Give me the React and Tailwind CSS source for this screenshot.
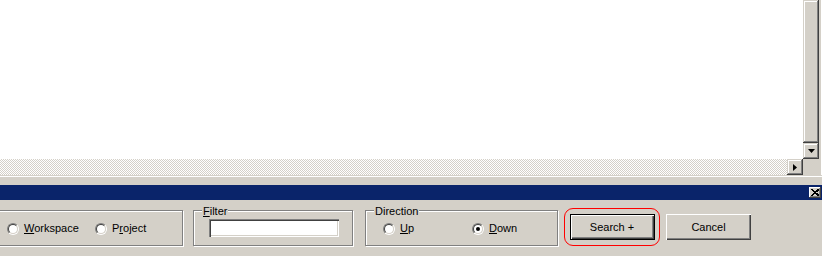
import React from "react";

const raised =
  "shadow-[inset_-1px_-1px_#404040,inset_1px_1px_#d4d0c8,inset_-2px_-2px_#808080,inset_2px_2px_#ffffff]";

function Radio({ checked }) {
  return (
    <span className="flex w-[12px] h-[12px] shrink-0 rounded-full border border-t-[#808080] border-l-[#808080] border-r-white border-b-white">
      <span className="flex w-[10px] h-[10px] items-center justify-center rounded-full border border-t-[#404040] border-l-[#404040] border-r-[#d4d0c8] border-b-[#d4d0c8] bg-white">
        {checked && <span className="block w-[4px] h-[4px] rounded-full bg-black" />}
      </span>
    </span>
  );
}

function RadioLabel({ checked, children, className = "" }) {
  return (
    <div className={"flex items-center gap-[5px] h-[13px] " + className}>
      <Radio checked={checked} />
      <span className="leading-[13px] whitespace-nowrap">{children}</span>
    </div>
  );
}

function Group({ label, className = "", children }) {
  return (
    <div
      className={
        "relative h-[36px] border border-[#808080] shadow-[1px_1px_#ffffff,inset_1px_1px_#ffffff] " +
        className
      }
    >
      {label && (
        <span className="absolute left-[8px] -top-[6px] px-[1px] bg-[#d4d0c8] leading-[13px]">
          {label}
        </span>
      )}
      {children}
    </div>
  );
}

export default function App() {
  return (
    <div className="w-[822px] h-[256px] overflow-hidden bg-[#d4d0c8] text-black text-[11px] font-['Liberation_Sans',Arial,sans-serif] flex flex-col">
      {/* Top editor area with scrollbars */}
      <div className="flex h-[175px]">
        <div className="flex flex-col w-[819px]">
          <div className="flex h-[159px]">
            <div className="w-[803px] bg-white" />
            <div className="flex flex-col w-[16px]">
              <div className={"h-[143px] bg-[#d4d0c8] " + raised} />
              <div className={"h-[16px] bg-[#d4d0c8] flex items-center justify-center " + raised}>
                <svg width="7" height="4" viewBox="0 0 7 4">
                  <polygon points="0,0 7,0 3.5,4" fill="#000" />
                </svg>
              </div>
            </div>
          </div>
          <div className="flex h-[16px]">
            <div className="w-[787px] bg-[repeating-conic-gradient(#d4d0c8_0_25%,#ffffff_0_50%)] bg-[length:2px_2px]" />
            <div className={"w-[16px] bg-[#d4d0c8] flex items-center justify-center " + raised}>
              <svg width="4" height="7" viewBox="0 0 4 7">
                <polygon points="0,0 4,3.5 0,7" fill="#000" />
              </svg>
            </div>
            <div className="w-[16px] bg-[#d4d0c8]" />
          </div>
        </div>
        <div className="w-[3px] flex">
          <div className="w-[2px] bg-[#d4d0c8]" />
          <div className="w-[1px] bg-white" />
        </div>
      </div>

      {/* separator */}
      <div className="h-[10px] flex flex-col">
        <div className="h-[1px] bg-[#d4d0c8]" />
        <div className="h-[1px] bg-white" />
        <div className="flex-1 bg-[#d4d0c8]" />
      </div>

      {/* Navy title bar */}
      <div className="h-[15px] bg-[#0a246a] flex justify-end items-start pr-[1px]">
        <div className={"mt-[2px] w-[12px] h-[11px] bg-[#d4d0c8] flex items-center justify-center shadow-[inset_-1px_-1px_#404040,inset_1px_1px_#ffffff,inset_-2px_-2px_#808080]"}>
          <svg width="8" height="7" viewBox="0 0 8 7" className="-mt-[1px]">
            <path d="M0.5 0.5 L7 6.5 M1.5 0.5 L8 6.5 M7 0.5 L0.5 6.5 M8 0.5 L1.5 6.5" stroke="#000" strokeWidth="1" fill="none" shapeRendering="crispEdges" />
          </svg>
        </div>
      </div>

      {/* Bottom panel */}
      <div className="flex-1 flex items-start">
        <Group className="-ml-[4px] w-[187px] mt-[10px]">
          <div className="flex items-center mt-[11px] pl-[10px]">
            <RadioLabel className="w-[88px]">
              <span className="underline">W</span>orkspace
            </RadioLabel>
            <RadioLabel>
              P<span className="underline">r</span>oject
            </RadioLabel>
          </div>
        </Group>

        <Group
          className="ml-[10px] w-[160px] mt-[10px]"
          label={
            <>
              <span className="underline">F</span>ilter
            </>
          }
        >
          <div className="ml-[15px] mt-[8px] w-[130px] h-[18px] bg-white shadow-[inset_1px_1px_#808080,inset_2px_2px_#404040,inset_-1px_-1px_#ffffff,inset_-2px_-2px_#d4d0c8]" />
        </Group>

        <Group className="ml-[12px] w-[193px] mt-[10px]" label="Direction">
          <div className="flex items-center mt-[11px] pl-[17px]">
            <RadioLabel className="w-[89px]">
              <span className="underline">U</span>p
            </RadioLabel>
            <RadioLabel checked>
              <span className="underline">D</span>own
            </RadioLabel>
          </div>
        </Group>

        <div className="ml-[6px] mt-[8px] w-[96px] h-[38px] rounded-[9px] border border-[#ff0000] flex items-center justify-center">
          <div className="w-[85px] h-[26px] bg-[#d4d0c8] flex items-center justify-center shadow-[inset_0_0_0_1px_#000000,inset_2px_2px_#ffffff,inset_-2px_-2px_#404040,inset_-3px_-3px_#808080]">
            Search +
          </div>
        </div>

        <div className="ml-[6px] mt-[14px] w-[85px] h-[26px] bg-[#d4d0c8] flex items-center justify-center shadow-[inset_1px_1px_#ffffff,inset_-1px_-1px_#404040,inset_-2px_-2px_#808080]">
          Cancel
        </div>
      </div>
    </div>
  );
}
